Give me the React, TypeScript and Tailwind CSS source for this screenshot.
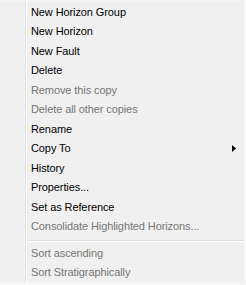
import React from "react";

type Item = { label: string; disabled?: boolean; submenu?: boolean; sep?: boolean };

const items: Item[] = [
  { label: "New Horizon Group" },
  { label: "New Horizon" },
  { label: "New Fault" },
  { label: "Delete" },
  { label: "Remove this copy", disabled: true },
  { label: "Delete all other copies", disabled: true },
  { label: "Rename" },
  { label: "Copy To", submenu: true },
  { label: "History" },
  { label: "Properties..." },
  { label: "Set as Reference" },
  { label: "Consolidate Highlighted Horizons...", disabled: true },
];

const items2: Item[] = [
  { label: "Sort ascending", disabled: true },
  { label: "Sort Stratigraphically", disabled: true },
];

function Row({ item, tall }: { item: Item; tall: boolean }) {
  return (
    <div
      className={`flex items-center justify-between pl-[31px] pr-[10px] ${tall ? "h-[20px]" : "h-[19px]"} ${
        item.disabled ? "text-[#767676]" : "text-black"
      }`}
    >
      <span className="whitespace-nowrap">{item.label}</span>
      {item.submenu && (
        <svg width="4" height="7" viewBox="0 0 4 7" className="mr-[0px]">
          <path d="M0 0 L4 3.5 L0 7 Z" fill="#000" />
        </svg>
      )}
    </div>
  );
}

export default function App() {
  return (
    <div
      className="relative w-[246px] h-[285px] bg-[#f0f0f0] overflow-hidden text-[11px] tracking-[-0.1px]"
      style={{ fontFamily: '"Liberation Sans", Arial, sans-serif' }}
    >
      <div className="absolute left-[25px] top-0 bottom-0 w-px bg-[#e2e3e3]" />
      <div className="absolute left-[26px] top-0 bottom-0 w-px bg-white" />
      <div className="absolute left-0 right-0 top-0 h-px bg-[#f5f5f5]" />
      <div className="absolute top-0 bottom-0 right-0 w-[2px] bg-[#f7f7f7]" />
      <div className="absolute left-0 right-0 bottom-0 h-[2px] bg-[#f7f7f7]" />
      <div className="relative flex flex-col pt-[2px]">
        {items.map((it, i) => (
          <Row key={it.label} item={it} tall={i % 2 === 0} />
        ))}
        <div className="h-[8px] flex flex-col pt-[4px] pl-[27px] pr-[2px]">
          <div className="h-px bg-[#e0e0e0]" />
          <div className="h-px bg-white" />
        </div>
        {items2.map((it) => (
          <Row key={it.label} item={it} tall={false} />
        ))}
      </div>
    </div>
  );
}
